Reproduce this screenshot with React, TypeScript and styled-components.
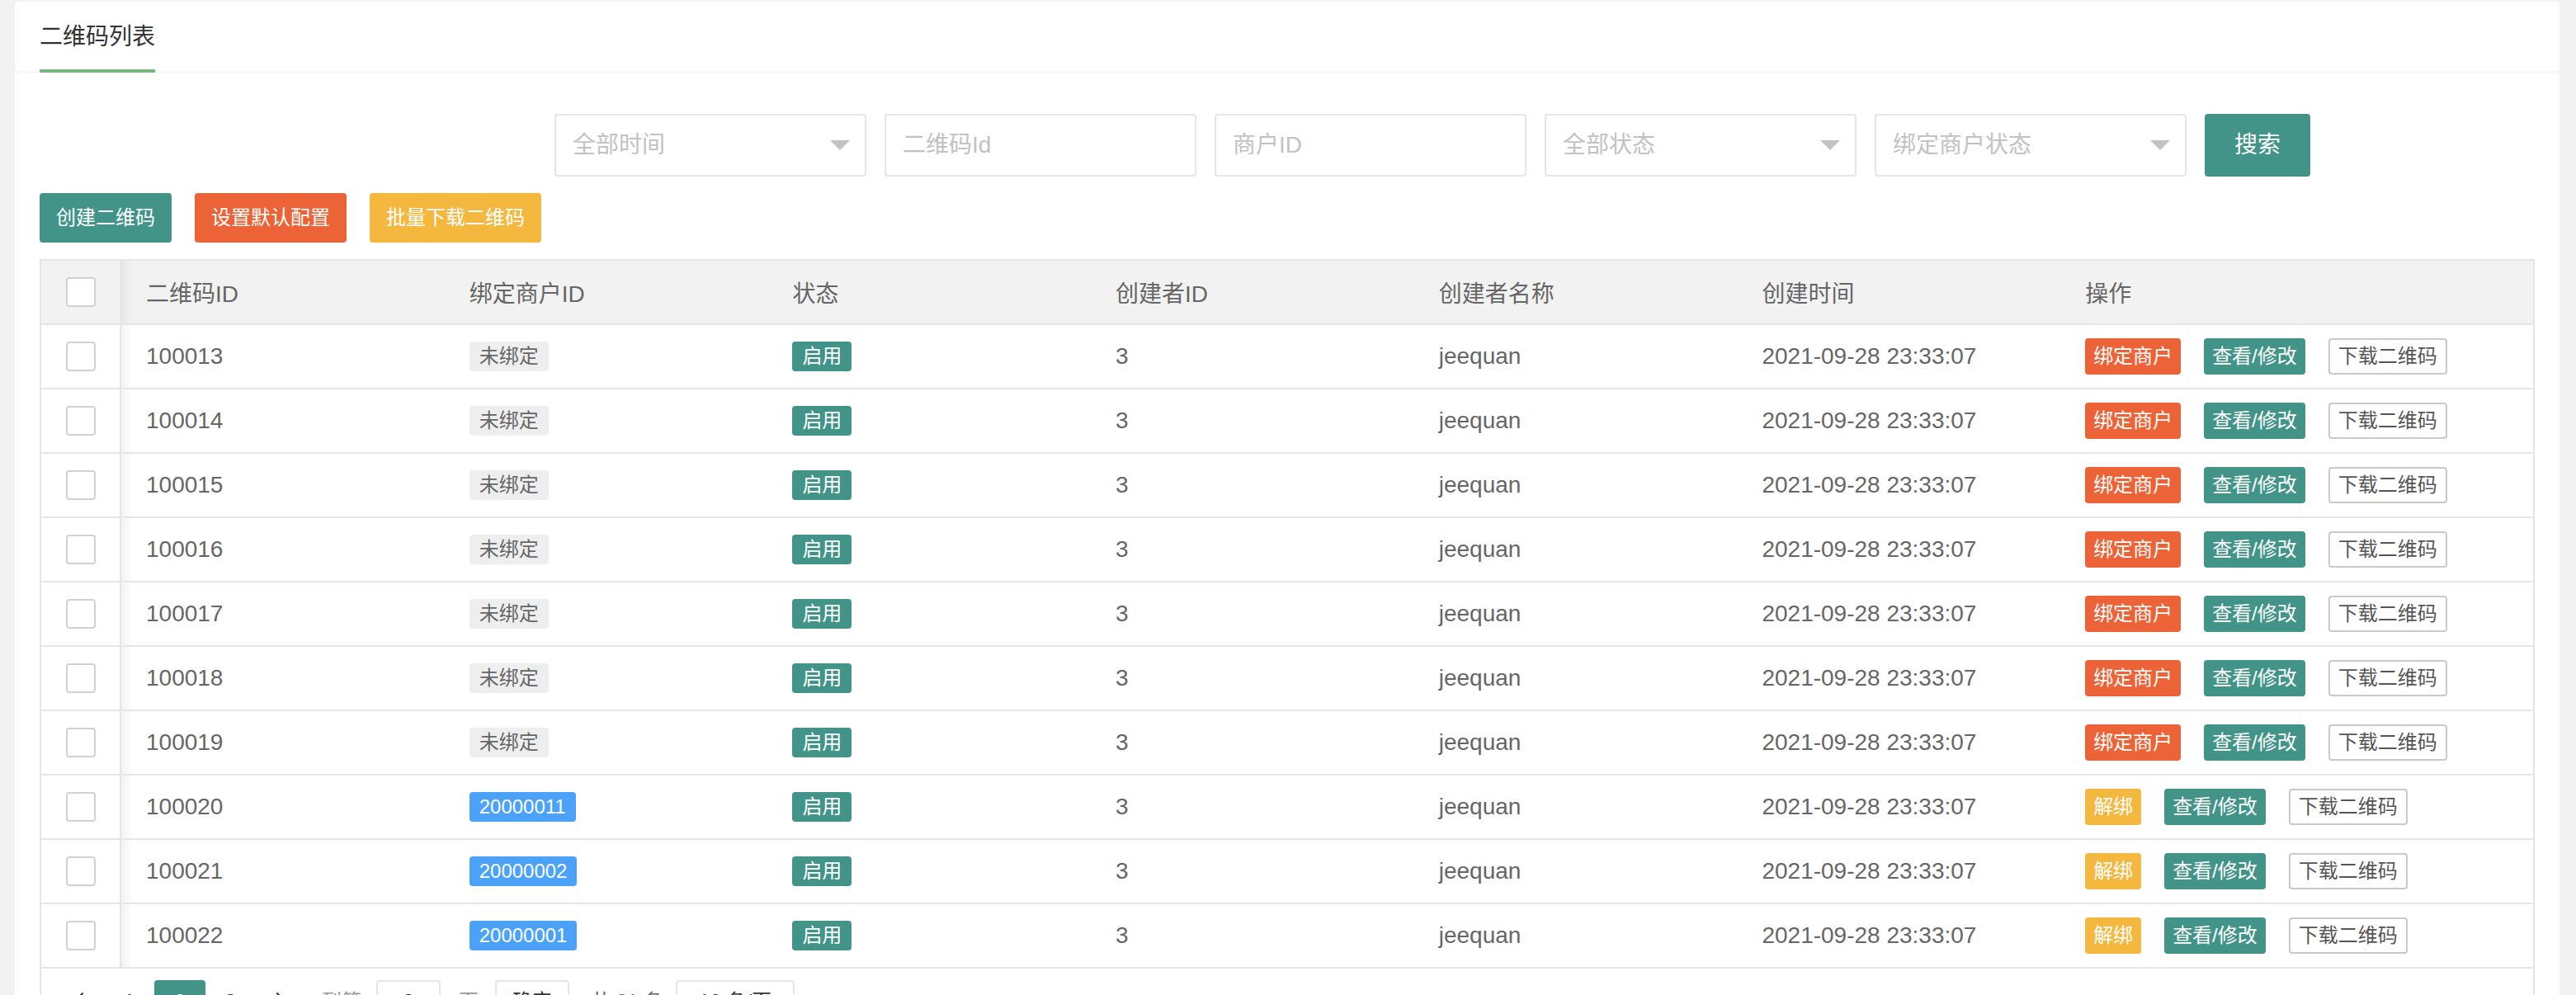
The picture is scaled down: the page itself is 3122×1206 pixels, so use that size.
import styled, { createGlobalStyle } from 'styled-components';

const GlobalStyle = createGlobalStyle`
	html, body {
		margin: 0;
		padding: 0;
		background: #f2f2f2;
	}
	body {
		font-family: 'Liberation Sans', 'Noto Sans CJK SC', sans-serif;
		color: #666;
	}
	* {
		box-sizing: border-box;
	}
`;

const TEAL = '#429488';
const ORANGE = '#ec6337';
const YELLOW = '#f5b83f';
const BLUE = '#4ba2f8';

const Page = styled.div`
	padding: 2px 20px 40px 18px;
`;

const Card = styled.div`
	background: #fff;
	border-radius: 4px;
`;

const CardHeader = styled.div`
	height: 86px;
	padding: 0 30px;
	display: flex;
	align-items: flex-start;
	border-bottom: 2px solid #f6f6f6;
`;

const Tab = styled.div`
	height: 86px;
	line-height: 85px;
	font-size: 28px;
	color: #333;
	border-bottom: 4px solid #78b77e;
`;

const Body = styled.div`
	padding: 50px 30px 30px;
`;

const FilterRow = styled.div`
	display: flex;
	gap: 22px;
	padding-left: 624px;
`;

const Field = styled.div`
	position: relative;
	width: 378px;
	height: 76px;
`;

const FieldInput = styled.input`
	width: 100%;
	height: 100%;
	padding: 0 20px;
	border: 2px solid #e6e6e6;
	border-radius: 4px;
	background: #fff;
	font-family: inherit;
	font-size: 28px;
	color: #666;
	outline: none;

	&::placeholder {
		color: #c2c2c2;
	}
`;

const Caret = styled.span`
	position: absolute;
	right: 20px;
	top: 50%;
	margin-top: -6px;
	width: 0;
	height: 0;
	border-style: solid;
	border-width: 12px 12px 0;
	border-color: #c2c2c2 transparent transparent;
`;

type Tone = 'teal' | 'orange' | 'yellow' | 'plain';
type Size = 'md' | 'sm' | 'xs';

const toneBg: Record<Tone, string> = {
	teal: TEAL,
	orange: ORANGE,
	yellow: YELLOW,
	plain: '#fff',
};

const sizes: Record<Size, { h: number; pad: number; fs: number }> = {
	md: { h: 76, pad: 36, fs: 28 },
	sm: { h: 60, pad: 20, fs: 24 },
	xs: { h: 44, pad: 10, fs: 24 },
};

const Btn = styled.button<{ $tone: Tone; $size: Size }>`
	height: ${(p) => sizes[p.$size].h}px;
	padding: 0 ${(p) => sizes[p.$size].pad}px;
	font-family: inherit;
	font-size: ${(p) => sizes[p.$size].fs}px;
	line-height: 1;
	white-space: nowrap;
	border-radius: 4px;
	cursor: pointer;
	background: ${(p) => toneBg[p.$tone]};
	color: ${(p) => (p.$tone === 'plain' ? '#555' : '#fff')};
	border: ${(p) => (p.$tone === 'plain' ? '2px solid #c9c9c9' : 'none')};
	flex-shrink: 0;
`;

const ActionBar = styled.div`
	margin-top: 20px;
	display: flex;
	gap: 28px;
`;

const Table = styled.div`
	margin-top: 20px;
	border: 2px solid #e6e6e6;
`;

const Row = styled.div<{ $head?: boolean }>`
	display: grid;
	grid-template-columns: 97px repeat(6, 391.7px) 1fr;
	height: 78px;
	border-bottom: 2px solid #e6e6e6;
	background: ${(p) => (p.$head ? '#f2f2f2' : '#fff')};
`;

const CheckCell = styled.div`
	position: relative;
	display: flex;
	align-items: center;
	justify-content: center;
	border-right: 2px solid #e6e6e6;

	&::after {
		content: '';
		position: absolute;
		top: 0;
		bottom: 0;
		right: -16px;
		width: 14px;
		background: linear-gradient(to right, rgba(0, 0, 0, 0.05), rgba(0, 0, 0, 0));
		pointer-events: none;
	}
`;

const CheckBox = styled.span`
	width: 36px;
	height: 36px;
	border: 2px solid #d2d2d2;
	border-radius: 4px;
	background: #fff;
`;

const Cell = styled.div`
	display: flex;
	align-items: center;
	gap: 28px;
	padding: 0 30px;
	font-size: 28px;
	color: #666;
	white-space: nowrap;
	overflow: hidden;
`;

type TagTone = 'gray' | 'green' | 'blue';

const tagColors: Record<TagTone, [string, string]> = {
	gray: ['#eeeeee', '#666'],
	green: [TEAL, '#fff'],
	blue: [BLUE, '#fff'],
};

const Tag = styled.span<{ $tone: TagTone }>`
	height: 36px;
	line-height: 36px;
	padding: 0 12px;
	border-radius: 4px;
	font-size: 24px;
	background: ${(p) => tagColors[p.$tone][0]};
	color: ${(p) => tagColors[p.$tone][1]};
`;

const Pager = styled.div`
	height: 82px;
	padding: 14px 14px 0;
	display: flex;
	align-items: flex-start;
	font-size: 24px;
	color: #333;
`;

const PageLink = styled.span<{ $current?: boolean }>`
	height: 52px;
	line-height: 52px;
	padding: 0 24px;
	display: flex;
	align-items: center;
	border-radius: 4px;
	background: ${(p) => (p.$current ? TEAL : 'transparent')};
	color: ${(p) => (p.$current ? '#fff' : '#333')};
`;

const SkipText = styled.span<{ $gap: number }>`
	height: 52px;
	line-height: 52px;
	margin-left: ${(p) => p.$gap}px;
	color: #999;
`;

const CountText = styled.span`
	height: 52px;
	line-height: 52px;
	margin-left: 26px;
	color: #666;
`;

const PagerBox = styled.span<{ $w: number; $gap: number }>`
	position: relative;
	width: ${(p) => p.$w}px;
	height: 52px;
	line-height: 48px;
	margin-left: ${(p) => p.$gap}px;
	border: 2px solid #e6e6e6;
	border-radius: 4px;
	text-align: center;
	color: #333;
	background: #fff;
`;

const Chevron = ({ dir }: { dir: 'left' | 'right' }) => (
	<svg width="14" height="24" viewBox="0 0 14 24" fill="none">
		<path
			d={dir === 'left' ? 'M12 2 L3 12 L12 22' : 'M2 2 L11 12 L2 22'}
			stroke="#333"
			strokeWidth="2"
			strokeLinecap="round"
			strokeLinejoin="round"
		/>
	</svg>
);

const headers = ['二维码ID', '绑定商户ID', '状态', '创建者ID', '创建者名称', '创建时间', '操作'];

const rows = [
	{ id: '100013', mch: '' },
	{ id: '100014', mch: '' },
	{ id: '100015', mch: '' },
	{ id: '100016', mch: '' },
	{ id: '100017', mch: '' },
	{ id: '100018', mch: '' },
	{ id: '100019', mch: '' },
	{ id: '100020', mch: '20000011' },
	{ id: '100021', mch: '20000002' },
	{ id: '100022', mch: '20000001' },
];

function App() {
	return (
		<>
			<GlobalStyle />
			<Page>
				<Card>
					<CardHeader>
						<Tab>二维码列表</Tab>
					</CardHeader>
					<Body>
						<FilterRow>
							<Field>
								<FieldInput readOnly placeholder="全部时间" />
								<Caret />
							</Field>
							<Field>
								<FieldInput placeholder="二维码Id" />
							</Field>
							<Field>
								<FieldInput placeholder="商户ID" />
							</Field>
							<Field>
								<FieldInput readOnly placeholder="全部状态" />
								<Caret />
							</Field>
							<Field>
								<FieldInput readOnly placeholder="绑定商户状态" />
								<Caret />
							</Field>
							<Btn $tone="teal" $size="md">
								搜索
							</Btn>
						</FilterRow>

						<ActionBar>
							<Btn $tone="teal" $size="sm">
								创建二维码
							</Btn>
							<Btn $tone="orange" $size="sm">
								设置默认配置
							</Btn>
							<Btn $tone="yellow" $size="sm">
								批量下载二维码
							</Btn>
						</ActionBar>

						<Table>
							<Row $head>
								<CheckCell>
									<CheckBox />
								</CheckCell>
								{headers.map((h) => (
									<Cell key={h}>{h}</Cell>
								))}
							</Row>
							{rows.map((r) => (
								<Row key={r.id}>
									<CheckCell>
										<CheckBox />
									</CheckCell>
									<Cell>{r.id}</Cell>
									<Cell>
										{r.mch ? <Tag $tone="blue">{r.mch}</Tag> : <Tag $tone="gray">未绑定</Tag>}
									</Cell>
									<Cell>
										<Tag $tone="green">启用</Tag>
									</Cell>
									<Cell>3</Cell>
									<Cell>jeequan</Cell>
									<Cell>2021-09-28 23:33:07</Cell>
									<Cell>
										{r.mch ? (
											<Btn $tone="yellow" $size="xs">
												解绑
											</Btn>
										) : (
											<Btn $tone="orange" $size="xs">
												绑定商户
											</Btn>
										)}
										<Btn $tone="teal" $size="xs">
											查看/修改
										</Btn>
										<Btn $tone="plain" $size="xs">
											下载二维码
										</Btn>
									</Cell>
								</Row>
							))}
							<Pager>
								<PageLink>
									<Chevron dir="left" />
								</PageLink>
								<PageLink>1</PageLink>
								<PageLink $current>2</PageLink>
								<PageLink>3</PageLink>
								<PageLink>
									<Chevron dir="right" />
								</PageLink>
								<SkipText $gap={18}>到第</SkipText>
								<PagerBox $w={78} $gap={18}>
									2
								</PagerBox>
								<SkipText $gap={22}>页</SkipText>
								<PagerBox $w={90} $gap={20}>
									确定
								</PagerBox>
								<CountText>共 21 条</CountText>
								<PagerBox $w={144} $gap={15}>
									10 条/页
								</PagerBox>
							</Pager>
						</Table>
					</Body>
				</Card>
			</Page>
		</>
	);
}

export default App;
